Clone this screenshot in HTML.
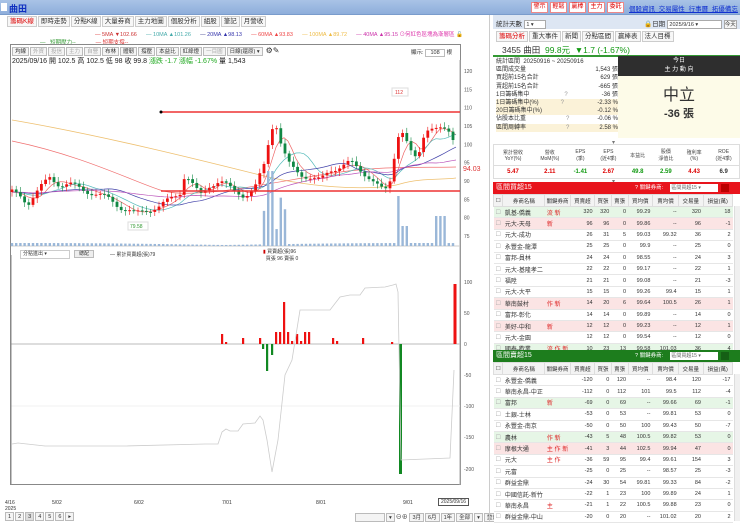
<!DOCTYPE html>
<html><head><meta charset="utf-8">
<style>
*{margin:0;padding:0;box-sizing:border-box}
body{width:740px;height:521px;overflow:hidden;background:#fff;font-family:"Liberation Sans","Noto Sans CJK TC",sans-serif;font-size:7px;color:#333;position:relative}
.abs{position:absolute}
#top{left:0;top:0;width:740px;height:15px;background:linear-gradient(#a9c3e6,#8eaedb);border-bottom:1px solid #7a9ccc}
.tab{display:inline-block;border:1px solid #ccc;background:#f7f7f7;padding:0 2px;height:11px;line-height:10px;margin-right:1px;font-size:6.5px}
.btn{display:inline-block;border:1px solid #bbb;background:#f4f4f4;padding:0 2px;height:9px;line-height:8px;margin-right:1px;font-size:5.5px;color:#333}
table{border-collapse:collapse}
.bt td{height:11.4px;border-bottom:1px solid #e6e6e6;font-size:5.5px;text-align:right;padding-right:2px;white-space:nowrap}
.bt td.n{text-align:left;padding-left:2px;font-size:6px}
.bt th{height:12px;font-size:5.5px;font-weight:normal;border:1px solid #ddd;background:#f3f3f3}
</style></head><body>
<div id="top" class="abs">
 <div class="abs" style="left:1px;top:3px;width:6px;height:8px;background:#fff"></div>
 <div class="abs" style="left:9px;top:2px;font-size:9px;color:#1030c0;font-weight:bold">曲田</div>
 <div class="abs" style="left:531px;top:2px">
  <span class="abs" style="left:0;width:17px;height:11px;background:#fff;border:1px solid #e88;color:#d00;font-size:6px;text-align:center;line-height:9px">警示</span>
  <span class="abs" style="left:19px;width:17px;height:11px;background:#fff;border:1px solid #e88;color:#d00;font-size:6px;text-align:center;line-height:9px">輕鬆</span>
  <span class="abs" style="left:38px;width:17px;height:11px;background:#fff;border:1px solid #e88;color:#d00;font-size:6px;text-align:center;line-height:9px">贏棒</span>
  <span class="abs" style="left:57px;width:17px;height:11px;background:#fff;border:1px solid #e88;color:#d00;font-size:6px;text-align:center;line-height:9px">主力</span>
  <span class="abs" style="left:76px;width:17px;height:11px;background:#fff;border:1px solid #e88;color:#d00;font-size:6px;text-align:center;line-height:9px">委託</span>
 </div>
 <div class="abs" style="left:629px;top:3px;font-size:6.5px;color:#1030d0;text-decoration:underline;word-spacing:2px">個股資訊 交易屬性 行事曆 拓優備忘</div>
</div>
<div class="abs" style="left:7px;top:16px;white-space:nowrap">
<span class="tab" style="color:#d00">籌碼K線</span><span class="tab">即時走勢</span><span class="tab">分點K線</span><span class="tab">大量券商</span><span class="tab">主力地圖</span><span class="tab">個股分析</span><span class="tab">組股</span><span class="tab">筆記</span><span class="tab">月營收</span>
</div>
<div class="abs" style="left:95px;top:30px;font-size:5.5px;white-space:nowrap">
<span style="color:#d33">—</span> <span style="color:#c33">5MA ▼102.66</span>&nbsp;&nbsp;&nbsp;&nbsp;&nbsp;&nbsp;<span style="color:#4aa">—</span> <span style="color:#4aa">10MA ▲101.26</span>&nbsp;&nbsp;&nbsp;&nbsp;&nbsp;&nbsp;<span style="color:#338">—</span> <span style="color:#33a">20MA ▲98.13</span>&nbsp;&nbsp;&nbsp;&nbsp;&nbsp;&nbsp;<span style="color:#e44">—</span> <span style="color:#e44">60MA ▲93.83</span>&nbsp;&nbsp;&nbsp;&nbsp;&nbsp;&nbsp;<span style="color:#eb4">—</span> <span style="color:#eb4">100MA ▲89.72</span>&nbsp;&nbsp;&nbsp;&nbsp;&nbsp;&nbsp;<span style="color:#c3a">— 40MA ▲95.15</span> <span style="color:#d3a">⊙何紅色區塊為漸層區</span> <b style="color:#000">🔓</b>
</div>
<div class="abs" style="left:40px;top:38px;font-size:5.5px;white-space:nowrap"><span style="color:#393">—&nbsp;&nbsp; 短期壓力--</span>&nbsp;&nbsp;&nbsp;&nbsp;&nbsp;&nbsp;&nbsp;&nbsp;&nbsp;&nbsp;&nbsp;&nbsp;&nbsp;<span style="color:#d33">— 短期支撐--</span></div>
<div class="abs" style="left:10px;top:44px;width:451px;height:441px;border:1px solid #888"></div>
<div class="abs" style="left:12px;top:46px;white-space:nowrap">
<span class="btn">均線</span><span class="btn" style="color:#aaa">外資</span><span class="btn" style="color:#aaa">投信</span><span class="btn" style="color:#aaa">主力</span><span class="btn" style="color:#aaa">自營</span><span class="btn">布林</span><span class="btn">體韌</span><span class="btn">撐壓</span><span class="btn">本益比</span><span class="btn">紅綠燈</span><span class="btn" style="color:#aaa">一目圖</span><span class="btn" style="width:36px">日線(還原) ▾</span> <span style="font-size:8px">⚙✎</span>
</div>
<div class="abs" style="left:12px;top:56px;font-size:7px;white-space:nowrap;color:#222">2025/09/16 開 102.5 高 102.5 低 98 收 99.8 <span style="color:#2a2">漲跌 -1.7 漲幅 -1.67%</span> 量 1,543</div>
<div class="abs" style="left:411px;top:48px;font-size:5.5px">顯示: <span style="display:inline-block;border:1px solid #bbb;width:20px;height:8px;text-align:center;line-height:7px">108</span> 根</div>
<svg class="abs" style="left:0;top:60px" width="490" height="425" id="ch"></svg>
<div class="abs" style="left:20px;top:250px;width:50px;height:9px;border:1px solid #ccc;font-size:5px;line-height:7px;padding-left:2px">分點進出 ▾</div>
<div class="abs" style="left:74px;top:250px;width:20px;height:8px;border:1px solid #bbb;background:#eee;font-size:5px;line-height:6px;text-align:center">總配</div>
<div class="abs" style="left:110px;top:251px;font-size:5px">— 累計買賣超(張)79</div>
<div class="abs" style="left:263px;top:249px;font-size:5px;line-height:6.5px"><span style="color:#c00">▮</span> 買賣超(張)96<br>&nbsp;&nbsp;買張 96 賣張 0</div>
<div class="abs" style="left:5px;top:500px;font-size:5px;line-height:6px">4/16<br>2025</div>
<div class="abs" style="left:52px;top:500px;font-size:5px">5/02</div>
<div class="abs" style="left:134px;top:500px;font-size:5px">6/02</div>
<div class="abs" style="left:222px;top:500px;font-size:5px">7/01</div>
<div class="abs" style="left:316px;top:500px;font-size:5px">8/01</div>
<div class="abs" style="left:403px;top:500px;font-size:5px">9/01</div>
<div class="abs" style="left:438px;top:498px;font-size:5px;border:1px solid #555;padding:0 2px;background:#fff">2025/09/16</div>
<div class="abs" style="left:5px;top:512px;font-size:6px;white-space:nowrap"><span class="btn">1</span><span class="btn">2</span><span class="btn" style="background:#ddd">3</span><span class="btn">4</span><span class="btn">5</span><span class="btn">6</span><span class="btn">▸</span></div>
<div class="abs" style="left:355px;top:512px;font-size:6px;white-space:nowrap"><span class="btn" style="width:30px">&nbsp;</span><span class="btn">▾</span>⊖⊕ <span class="btn">3月</span><span class="btn">6月</span><span class="btn">1年</span><span class="btn">全部</span><span class="btn">▾</span><span class="btn">重畫</span></div>
<div class="abs" style="left:489px;top:15px;width:1px;height:506px;background:#ccc"></div>
<div class="abs" style="left:493px;top:15px;width:247px;height:14px;background:#dde6f3"></div>
<div class="abs" style="left:496px;top:18px;font-size:6.5px">統計天數 <span style="display:inline-block;border:1px solid #aaa;background:#fff;width:22px;height:9px;font-size:5.5px;line-height:8px">&nbsp;1 ▾</span></div>
<div class="abs" style="left:644px;top:18px;font-size:6.5px">🔒日期 <span style="display:inline-block;border:1px solid #aaa;background:#fff;width:55px;height:9px;font-size:5.5px;line-height:8px">&nbsp;2025/9/16 ▾</span> <span style="display:inline-block;border:1px solid #aaa;background:#f6f6f6;height:9px;font-size:5.5px;line-height:8px">今天</span></div>
<div class="abs" style="left:496px;top:31px;white-space:nowrap"><span class="tab" style="color:#d00">籌碼分析</span><span class="tab">重大事件</span><span class="tab">新聞</span><span class="tab">分點區間</span><span class="tab">贏棒表</span><span class="tab">法人目標</span></div>
<div class="abs" style="left:493px;top:43px;width:247px;height:14px;border-bottom:2px solid #393"></div>
<div class="abs" style="left:502px;top:44px;font-size:8.5px;white-space:nowrap">3455 曲田&nbsp; <span style="color:#191">99.8元&nbsp; ▼1.7 (-1.67%)</span></div>
<div class="abs" style="left:496px;top:58px;width:122px;font-size:6px;line-height:8.2px">
<div>統計區間&nbsp; 20250916 ~ 20250916</div>
<div>區間成交量<span style="float:right">1,543 張</span></div>
<div>買超前15名合計<span style="float:right">629 張</span></div>
<div>賣超前15名合計<span style="float:right">-665 張</span></div>
<div>1日籌碼集中<span style="margin-left:35px;color:#999">?</span><span style="float:right">-36 張</span></div>
<div style="background:#fbf2d8">1日籌碼集中(%)<span style="margin-left:22px;color:#999">?</span><span style="float:right">-2.33 %</span></div>
<div style="background:#fbf2d8">20日籌碼集中(%)<span style="float:right">-0.12 %</span></div>
<div>佔股本比重<span style="margin-left:40px;color:#999">?</span><span style="float:right">-0.06 %</span></div>
<div style="background:#fbf2d8">區間周轉率<span style="margin-left:40px;color:#999">?</span><span style="float:right">2.58 %</span></div>
</div>
<div class="abs" style="left:618px;top:56px;width:122px;height:20px;background:#2e2e2e;color:#fff;text-align:center;font-size:6px;line-height:9px;padding-top:1px">今日<br>主 力 動 向</div>
<div class="abs" style="left:618px;top:76px;width:122px;height:62px;background:#fdfbe8;text-align:center">
<div style="font-size:16px;margin-top:5px;color:#333">中立</div><div style="font-size:11px;font-weight:bold;color:#333">-36 張</div></div>
<div class="abs" style="left:612px;top:139px;font-size:6px;color:#777">▾</div>
<table class="abs" style="left:493px;top:144px;width:247px;font-size:5px;text-align:center;border:1px solid #ddd">
<tr style="height:21px;color:#444"><td>累計營收<br>YoY(%)</td><td>營收<br>MoM(%)</td><td>EPS<br>(季)</td><td>EPS<br>(近4季)</td><td>本益比</td><td>股價<br>淨值比</td><td>殖利率<br>(%)</td><td>ROE<br>(近4季)</td></tr>
<tr style="height:13px;font-size:6px;font-weight:bold;border-top:1px solid #ddd"><td style="color:#d00">5.47</td><td style="color:#d00">2.11</td><td style="color:#191">-1.41</td><td style="color:#d00">2.67</td><td style="color:#191">49.8</td><td style="color:#191">2.59</td><td style="color:#d00">4.43</td><td>6.9</td></tr></table>
<div class="abs" style="left:612px;top:178px;font-size:6px;color:#777">▾</div>
<div class="abs" style="left:493px;top:182px;width:247px;height:12px;background:#e8141c;color:#fff;font-size:7px;line-height:12px;padding-left:3px">區間買超15<span style="position:absolute;left:142px;font-size:5.5px">? 關鍵券商:</span><span style="position:absolute;left:177px;top:2px;width:48px;height:8px;background:#fff;color:#666;font-size:5px;line-height:8px">&nbsp;區間買超15 ▾</span><span style="position:absolute;left:228px;top:2px;width:8px;height:8px;background:#b00"></span></div>
<table class="abs bt" style="left:493px;top:194px;width:240px" id="tb1"></table>
<div class="abs" style="left:493px;top:350px;width:247px;height:12px;background:#1d7d1d;color:#fff;font-size:7px;line-height:12px;padding-left:3px">區間賣超15<span style="position:absolute;left:142px;font-size:5.5px">? 關鍵券商:</span><span style="position:absolute;left:177px;top:2px;width:48px;height:8px;background:#fff;color:#666;font-size:5px;line-height:8px">&nbsp;區間買超15 ▾</span><span style="position:absolute;left:228px;top:2px;width:8px;height:8px;background:#155f15"></span></div>
<table class="abs bt" style="left:493px;top:362px;width:240px" id="tb2"></table>
<div class="abs" style="left:734px;top:206px;width:6px;height:144px;background:#f0f0f0;border-left:1px solid #ddd"></div>
<div class="abs" style="left:734px;top:374px;width:6px;height:147px;background:#f0f0f0;border-left:1px solid #ddd"></div>
<script>
var hdr='<tr><th style="width:8px">☐</th><th style="width:40px">券商名稱</th><th style="width:22px">關鍵券商</th><th>買賣超</th><th>買張</th><th>賣張</th><th>買均價</th><th>賣均價</th><th>交易量</th><th>損益(萬)</th></tr>';
var b=[["凱基-僑義","流 新","320","320","0","99.29","--","320","18","#e6f6e6"],["元大-天母","新","96","96","0","99.86","--","96","-1","#fbe4e4"],["元大-成功","","26","31","5","99.03","99.32","36","2",""],["永豐金-龍潭","","25","25","0","99.9","--","25","0",""],["富邦-員林","","24","24","0","98.55","--","24","3",""],["元大-基隆孝二","","22","22","0","99.17","--","22","1",""],["福陞","","21","21","0","99.08","--","21","-3",""],["元大-大平","","15","15","0","99.26","99.4","15","1",""],["華南鼓村","作 新","14","20","6","99.64","100.5","26","1","#fbe4e4"],["富邦-彰化","","14","14","0","99.89","--","14","0",""],["美好-中和","新","12","12","0","99.23","--","12","1","#fbe4e4"],["元大-金園","","12","12","0","99.54","--","12","0",""],["國泰-歡業","流 作 新","10","23","13","99.58","101.03","36","4","#e6f6e6"]];
var s=[["永豐金-僑義","","-120","0","120","--","98.4","120","-17",""],["華南永昌-中正","","-112","0","112","101","99.5","112","-4",""],["富邦","新","-69","0","69","--","99.66","69","-1","#e6f6e6"],["土銀-士林","","-53","0","53","--","99.81","53","0",""],["永豐金-南京","","-50","0","50","100","99.43","50","-7",""],["農林","作 新","-43","5","48","100.5","99.82","53","0","#e6f6e6"],["摩根大通","主 作 新","-41","3","44","102.5","99.94","47","0","#fbe4e4"],["元大","主 作","-36","59","95","99.4","99.61","154","3",""],["元富","","-25","0","25","--","98.57","25","-3",""],["群益金鼎","","-24","30","54","99.81","99.33","84","-2",""],["中國信託-新竹","","-22","1","23","100","99.89","24","1",""],["華南永昌","主","-21","1","22","100.5","99.88","23","0",""],["群益金鼎-中山","","-20","0","20","--","101.02","20","2",""]];
function mk(id,a){var h=hdr;a.forEach(function(r){h+='<tr style="background:'+(r[9]||'#fff')+'"><td class="n" style="color:#aaa">☐</td><td class="n">'+r[0]+'</td><td class="n" style="color:#d22">'+r[1]+'</td>';for(var i=2;i<9;i++)h+='<td>'+r[i]+'</td>';h+='</tr>';});document.getElementById(id).innerHTML=h;}
mk('tb1',b);mk('tb2',s);
var S='';
function y(p){return 11+(120-p)*3.667;}
S+='<line x1="460" y1="0" x2="460" y2="425" stroke="#aaa"/>';
[120,115,110,105,100,95,90,85,80,75].forEach(function(p){S+='<text x="464" y="'+(y(p)+2)+'" font-size="5" fill="#555">'+p+'</text>';});
S+='<line x1="11" y1="186" x2="460" y2="186" stroke="#ccc"/>';
S+='<path d="M12,60 C100,75 200,100 260,115 S380,130 400,124 S440,120 456,118" fill="none" stroke="#eec070" stroke-width="0.8"/>';
S+='<path d="M12,81 C80,95 130,120 160,130 S260,125 320,115 S420,108 456,107" fill="none" stroke="#f07070" stroke-width="0.7"/>';
var K=[[11,87],[20,86],[28,84],[40,88],[50,91],[60,89],[70,89],[80,88],[90,87],[100,86],[110,85],[120,83],[135,81],[145,82],[160,83],[170,85],[180,87],[185,92],[195,88],[200,86],[210,89],[220,90],[230,88],[245,86],[255,88],[265,95],[270,103],[275,107],[280,101],[285,97],[290,94],[300,92],[310,91],[320,90],[330,93],[340,94],[350,95],[360,93],[370,91],[380,88],[385,87],[390,90],[395,98],[400,105],[405,102],[410,98],[415,96],[420,98],[425,104],[430,105],[440,104],[450,103],[456,100]];
function P(x){for(var i=1;i<K.length;i++)if(x<=K[i][0]){var a=K[i-1],c=K[i];return a[1]+(c[1]-a[1])*(x-a[0])/(c[0]-a[0]);}return 100;}
function ma(sm,col){var d='';for(var x=12;x<=456;x+=4){var s=0;for(var k=0;k<sm;k++)s+=P(Math.max(11,x-k*4));d+=(d?'L':'M')+x+','+y(s/sm).toFixed(1);}S+='<path d="'+d+'" fill="none" stroke="'+col+'" stroke-width="0.7"/>';}
ma(5,'#e66');ma(10,'#5bb');ma(20,'#44a');ma(40,'#b5b');
var prev=P(11);
for(var x=12;x<=456;x+=4.2){var c=P(x)+Math.sin(x*1.7)*0.8;var o=prev;var hi=Math.max(o,c)+0.6+Math.abs(Math.sin(x))*0.8,lo=Math.min(o,c)-0.6-Math.abs(Math.cos(x))*0.8;var col=c>=o?'#e11':'#184';
S+='<line x1="'+x+'" y1="'+y(hi)+'" x2="'+x+'" y2="'+y(lo)+'" stroke="'+col+'" stroke-width="0.6"/>';
var t=y(Math.max(o,c)),h=Math.max(1,Math.abs(y(o)-y(c)));S+='<rect x="'+(x-1.4)+'" y="'+t+'" width="2.8" height="'+h+'" fill="'+col+'"/>';
var v=1+Math.abs(Math.sin(x*3))*2; if(x>262&&x<285)v=15+Math.abs(c-o)*8; if(x>395&&x<410)v=20; if(x>268&&x<274)v=75; if(x>396&&x<401)v=50;if(x>436&&x<445)v=30;
S+='<rect x="'+(x-1.2)+'" y="'+(186-v)+'" width="2.4" height="'+v+'" fill="#9ab7d8"/>';prev=c;}
S+='<line x1="161" y1="52" x2="460" y2="52" stroke="#e33" stroke-width="1.5"/><circle cx="161" cy="52" r="1.5" fill="#000"/>';
S+='<line x1="161" y1="131" x2="460" y2="131" stroke="#e33" stroke-width="1.5"/>';
S+='<text x="463" y="111" font-size="7" fill="#d33">94.03</text>';
S+='<rect x="392" y="28" width="16" height="8" fill="#fff" stroke="#ddd"/><text x="395" y="34" font-size="5" fill="#d33">112</text>';
S+='<rect x="128" y="162" width="20" height="8" fill="#fff" stroke="#ddd"/><text x="130" y="168" font-size="5" fill="#393">79.58</text>';
S+='<line x1="11" y1="284" x2="460" y2="284" stroke="#bbb"/>';
S+='<line x1="11" y1="346" x2="460" y2="346" stroke="#f0f0f0"/>';
S+='<line x1="11" y1="195" x2="11" y2="425" stroke="#888"/>';
[[100,222],[50,253],[0,284],[-50,315],[-100,346],[-150,377],[-200,409]].forEach(function(a){S+='<text x="464" y="'+(a[1]+2)+'" font-size="5" fill="#555">'+a[0]+'</text>';});
var rb=[[222,274],[226,282],[243,278],[260,278],[276,272],[280,272],[284,242],[288,272],[292,281],[297,274],[301,281],[305,272],[309,272],[333,278],[337,281],[363,278],[392,282]];
rb.forEach(function(r){S+='<rect x="'+(r[0]-1)+'" y="'+r[1]+'" width="2.2" height="'+(284-r[1])+'" fill="#e11"/>';});
[[263,289],[267,311],[272,295]].forEach(function(r){S+='<rect x="'+(r[0]-1)+'" y="284" width="2.2" height="'+(r[1]-284)+'" fill="#182"/>';});
S+='<rect x="399" y="284" width="3" height="130" fill="#182"/><rect x="453.5" y="224" width="3" height="60" fill="#e11"/>';
S+='<path d="M12,384 L18,383 L45,386 L125,386 L205,384 L218,384 L222,372 L226,369 L230,371 L238,371 L243,364 L255,363 L260,356 L263,360 L267,380 L272,412 L278,380 L285,315 L292,300 L300,250 L310,250 L330,250 L340,237 L350,235 L360,235 L365,228 L385,227 L393,225 L396,224 L398,232 L401,400 L450,398 L454,310" fill="none" stroke="#ccc" stroke-width="0.8"/>';
document.getElementById('ch').innerHTML=S;
</script>
</body></html>
